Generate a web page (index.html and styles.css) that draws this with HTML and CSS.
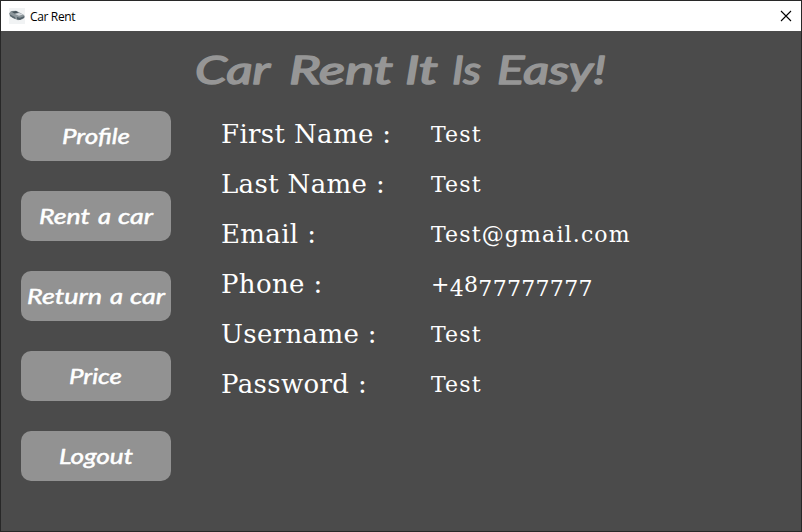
FILE: index.html
```
<!DOCTYPE html>
<html lang="en">
<head>
<meta charset="utf-8">
<title>Car Rent</title>
<link rel="stylesheet" href="styles.css">
</head>
<body>
<div class="window">
  <header class="titlebar">
    <svg class="app-icon" viewBox="0 0 16 16">
      <rect width="16" height="16" fill="#f1f3f4"/>
      <path d="M0 5.5 2 3l5-.3 4 2 4 2.3 1 2-2 2-5 1.2L4 10 1 8z" fill="#8d979c"/>
      <path d="M2.5 3.7 7 3l2.7 1.6-4 .8z" fill="#46535a"/>
      <path d="m6 6 4-1 4 1.5-4 1.3z" fill="#d5dade"/>
      <path d="m1 6.5 3 1.5 2 1 .5 2L4 10 1 8z" fill="#5a676e"/>
      <path d="m8 9 3 .8 4-1.5v1.5L11 12l-3-.7z" fill="#526068"/>
    </svg>
    <span class="app-name">Car Rent</span>
    <svg class="close" viewBox="0 0 12 12"><path d="m1 1 10 10M11 1 1 11"/></svg>
  </header>
  <main class="content">
    <svg class="heading" viewBox="0 0 800 60">
      <text x="194" y="43" textLength="75" lengthAdjust="spacingAndGlyphs">Car</text>
      <text x="288" y="43" textLength="104" lengthAdjust="spacingAndGlyphs">Rent</text>
      <text x="404" y="43" textLength="33" lengthAdjust="spacingAndGlyphs">It</text>
      <text x="451" y="43" textLength="29" lengthAdjust="spacingAndGlyphs">Is</text>
      <text x="496" y="43" textLength="109" lengthAdjust="spacingAndGlyphs">Easy!</text>
    </svg>
    <div class="columns">
      <nav class="menu">
        <button><svg viewBox="0 0 150 50"><text x="41" y="33" textLength="68" lengthAdjust="spacingAndGlyphs">Profile</text></svg></button>
        <button><svg viewBox="0 0 150 50"><text x="18" y="33" textLength="51" lengthAdjust="spacingAndGlyphs">Rent</text><text x="77" y="33" textLength="13" lengthAdjust="spacingAndGlyphs">a</text><text x="97" y="33" textLength="35" lengthAdjust="spacingAndGlyphs">car</text></svg></button>
        <button><svg viewBox="0 0 150 50"><text x="6" y="33" textLength="75" lengthAdjust="spacingAndGlyphs">Return</text><text x="89" y="33" textLength="13" lengthAdjust="spacingAndGlyphs">a</text><text x="109" y="33" textLength="35" lengthAdjust="spacingAndGlyphs">car</text></svg></button>
        <button><svg viewBox="0 0 150 50"><text x="48" y="33" textLength="53" lengthAdjust="spacingAndGlyphs">Price</text></svg></button>
        <button><svg viewBox="0 0 150 50"><text x="38" y="33" textLength="74" lengthAdjust="spacingAndGlyphs">Logout</text></svg></button>
      </nav>
      <dl class="details">
        <dt>First Name :</dt><dd>Test</dd>
        <dt>Last Name :</dt><dd>Test</dd>
        <dt>Email :</dt><dd>Test@gmail.com</dd>
        <dt>Phone :</dt><dd class="phone">+<span class="low">4</span>8<span class="low">77777777</span></dd>
        <dt>Username :</dt><dd>Test</dd>
        <dt>Password :</dt><dd>Test</dd>
      </dl>
    </div>
  </main>
</div>
</body>
</html>
```
FILE: styles.css
```
* { box-sizing: border-box; }
body { margin: 0; background: #4b4b4b; }
.window { width: 802px; height: 532px; border: 1px solid #282828; background: #4b4b4b; overflow: hidden; }
.titlebar { height: 30px; background: #fff; display: flex; align-items: center; padding: 0 9px 0 8px; }
.app-icon { width: 16px; height: 16px; }
.app-name { flex: 1; margin-left: 5px; font: 12px "Open Sans", sans-serif; letter-spacing: -0.35px; color: #000; }
.close { width: 12px; height: 12px; fill: none; stroke: #000; stroke-width: 1.1; }
.content { padding-top: 10px; }
.heading { display: block; width: 800px; height: 60px; font: italic 400 38px Lato, sans-serif; fill: #969696; stroke: #969696; stroke-width: 1.5; stroke-linejoin: round; }
.columns { display: flex; padding: 10px 20px 0; gap: 50px; }
.menu { display: grid; gap: 30px; width: 150px; }
.menu button { width: 150px; height: 50px; padding: 0; border: 0; border-radius: 10px; background: #929292; }
.menu svg { display: block; width: 150px; height: 50px; font: italic 400 22px Lato, sans-serif; fill: #fff; stroke: #fff; stroke-width: .5; stroke-linejoin: round; }
.details { margin: -2px 0 0; display: grid; grid-template-columns: 210px 1fr; grid-auto-rows: 50px; align-content: start; font-family: "DejaVu Serif", serif; line-height: 50px; color: #fff; white-space: nowrap; }
.details dt { font-size: 26px; letter-spacing: .35px; }
.details dd { margin: 0; padding-top: 1px; font-size: 22px; letter-spacing: 1.15px; }
.details .phone { letter-spacing: .3px; }
.low { display: inline-block; line-height: 1; vertical-align: -4px; }
```
